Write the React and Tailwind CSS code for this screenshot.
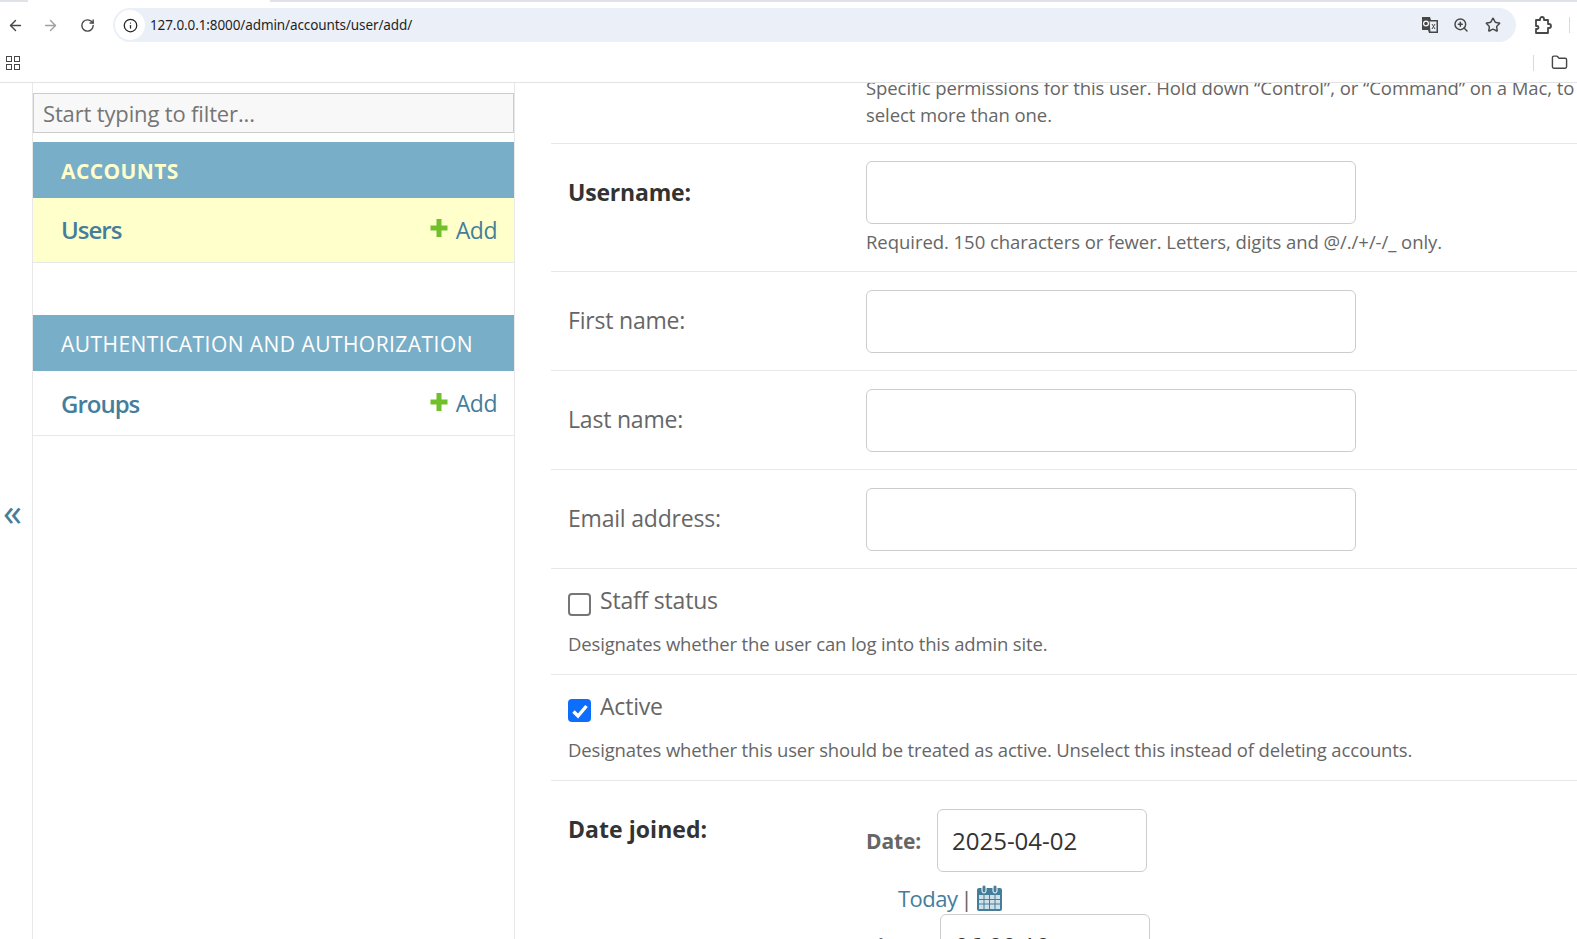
import { ArrowLeft, ArrowRight, RotateCw, Info, ZoomIn, Star, Folder } from "lucide-react";

const font = { fontFamily: '"Open Sans", "Noto Sans", sans-serif' };

const Plus = () => (
  <svg width="18" height="20" viewBox="0 0 18 20" className="shrink-0">
    <path d="M6.5 1h5v6.500h6v5h-6V19h-5v-6.500H.5v-5h6z" fill="#70bf2b" />
  </svg>
);

const ModelRow = ({ name, active }) => (
  <div
    className={`flex h-[65px] items-center justify-between border-b border-[#e8e8e8] pl-7 pr-[17px] ${active ? "bg-[#ffffcc]" : "pt-[1px]"}`}
  >
    <span className="text-[24px] font-semibold tracking-[-1px] text-[#447e9b]">{name}</span>
    <span className="flex items-center gap-2 text-[23px] tracking-[-0.5px] text-[#447e9b]">
      <span className="-mt-1">
        <Plus />
      </span>
      Add
    </span>
  </div>
);

const TextRow = ({ label, bold, help }) => (
  <div className={`flex items-start border-b border-[#e8e8e8] px-[17px] ${help ? "h-[128.5px] pt-[17px]" : "h-[99px] pt-[18px]"}`}>
    <div
      className={`w-[298px] text-[23px] leading-[36px] ${help ? "pt-[13px]" : "pt-[12px]"} ${bold ? "font-bold tracking-[-0.2px] text-[#333333]" : "tracking-[-0.2px] text-[#666666]"}`}
    >
      {label}
    </div>
    <div>
      <div className="h-[63px] w-[490px] rounded-[6px] border border-[#cccccc]" />
      {help && <p className="mt-[5px] text-[18.5px] leading-[26px] tracking-[-0.05px] text-[#666666]">{help}</p>}
    </div>
  </div>
);

const CheckRow = ({ label, help, checked }) => (
  <div className="h-[106px] border-b border-[#e8e8e8] px-[17px] pt-[13px]">
    <div className="flex items-start gap-[9px]">
      {checked ? (
        <span className="mt-[11px] flex h-[23px] w-[23px] items-center justify-center rounded-[4px] bg-[#0d6efd]">
          <svg width="18" height="16" viewBox="0 0 18 16">
            <path d="M2.500 8.500l4.500 4.500 8.500-10" fill="none" stroke="white" strokeWidth="3.400" />
          </svg>
        </span>
      ) : (
        <span className="mt-[11px] h-[23px] w-[23px] rounded-[4px] border-2 border-[#767676] bg-white" />
      )}
      <span className="text-[23px] leading-[36px] tracking-[-0.2px] text-[#666666]">{label}</span>
    </div>
    <p className="mt-[13px] text-[18.5px] leading-[26px] tracking-[-0.15px] text-[#666666]">{help}</p>
  </div>
);

export default function App() {
  return (
    <div className="flex h-[939px] flex-col overflow-hidden bg-white" style={font}>
      {/* browser chrome */}
      <div className="h-[83px] shrink-0 border-b border-[#e3e3e3]" style={{ fontFamily: '"Noto Sans", sans-serif' }}>
        <div className="flex h-[2px]">
          <div className="w-[28px] bg-[#dfe3e8]" />
          <div className="ml-[242px] flex-1 bg-[#dfe3e8]" />
        </div>
        <div className="flex h-[46px] items-center">
          <ArrowLeft className="ml-[7px] size-[17px] text-[#474747]" strokeWidth={2} />
          <ArrowRight className="ml-[18px] size-[17px] text-[#a0a0a0]" strokeWidth={2} />
          <RotateCw className="ml-[21px] size-[15px] text-[#474747]" strokeWidth={2.2} />
          <div className="ml-[18px] flex h-[34px] w-[1403px] items-center rounded-full bg-[#ebf0f8]">
            <span className="ml-[2px] flex size-[30px] items-center justify-center rounded-full bg-white">
              <Info className="size-[15px] text-[#222222]" strokeWidth={2} />
            </span>
            <span className="ml-[5px] text-[13.5px] tracking-[-0.1px] text-[#1f1f1f]">127.0.0.1:8000/admin/accounts/user/add/</span>
            <svg width="18" height="18" viewBox="0 0 18 18" className="ml-auto">
              <path d="M1 1h8l1 3h7v13H8l-1-3H1z" fill="#474747" />
              <path d="M8 5h8v11H9z" fill="#ebf0f8" stroke="#474747" />
              <path d="M11 8l3 5M14 8l-3 5" stroke="#474747" fill="none" />
              <circle cx="5" cy="7.5" r="2.4" fill="none" stroke="white" strokeWidth="1.2" />
            </svg>
            <ZoomIn className="ml-[14px] size-[16px] text-[#474747]" strokeWidth={2.2} />
            <Star className="ml-[16px] mr-[15px] size-[16px] text-[#474747]" strokeWidth={2.2} />
          </div>
          <svg width="18" height="18" viewBox="0 0 18 18" className="ml-[18px]">
            <path
              d="M2 4h4V3a2 2 0 0 1 4 0v1h4v4h1a2 2 0 0 1 0 4h-1v5H2v-4h1a1.500 1.500 0 0 0 0-3H2z"
              fill="none"
              stroke="#474747"
              strokeWidth="1.800"
              strokeLinejoin="round"
            />
          </svg>
          <div className="ml-[17px] h-[16px] w-[1px] bg-[#c9dcf7]" />
        </div>
        <div className="flex h-[29px] items-center">
          <div className="ml-[6px] grid grid-cols-2 gap-[2px]">
            <span className="size-[6px] border-[1.5px] border-[#474747]" />
            <span className="size-[6px] border-[1.5px] border-[#474747]" />
            <span className="size-[6px] border-[1.5px] border-[#474747]" />
            <span className="size-[6px] border-[1.5px] border-[#474747]" />
          </div>
          <div className="ml-auto h-[16px] w-[1px] bg-[#c9dcf7]" />
          <Folder className="ml-[17px] mr-[9px] size-[17px] text-[#474747]" strokeWidth={2} />
        </div>
      </div>

      <div className="flex min-h-0 flex-1">
        {/* collapse toggle */}
        <div className="flex w-[33px] shrink-0 items-center justify-center border-r border-[#e8e8e8] pr-[7px]">
          <span className="text-[38px] leading-none text-[#447e9b]">«</span>
        </div>

        {/* sidebar */}
        <div className="w-[482px] shrink-0 border-r border-[#e8e8e8] pt-[10px]">
          <div className="flex h-[40px] items-center border border-[#cccccc] bg-[#f8f8f8] px-[9px] text-[22px] tracking-[-0.15px] text-[#757575]">
            Start typing to filter...
          </div>
          <div className="mt-[9px] flex h-[56px] items-center bg-[#79aec8] pl-7 pt-[4px] text-[21px] font-bold tracking-[0.4px] text-[#ffffcc]">
            ACCOUNTS
          </div>
          <ModelRow name="Users" active />
          <div className="h-[52px]" />
          <div className="flex h-[56px] items-center bg-[#79aec8] pl-7 pt-[4px] text-[21px] tracking-[0.45px] text-white">
            AUTHENTICATION AND AUTHORIZATION
          </div>
          <ModelRow name="Groups" />
        </div>

        {/* form */}
        <div className="min-w-0 flex-1 overflow-hidden pl-[36px]">
          <div className="h-[60.5px] overflow-hidden border-b border-[#e8e8e8] pl-[315px]">
            <p className="-mt-[9px] w-[720px] text-[18.5px] leading-[27px] tracking-[-0.08px] text-[#666666]">
              Specific permissions for this user. Hold down “Control”, or “Command” on a Mac, to select more than one.
            </p>
          </div>
          <TextRow label="Username:" bold help="Required. 150 characters or fewer. Letters, digits and @/./+/-/_ only." />
          <TextRow label="First name:" />
          <TextRow label="Last name:" />
          <TextRow label="Email address:" />
          <CheckRow label="Staff status" help="Designates whether the user can log into this admin site." />
          <CheckRow
            label="Active"
            checked
            help="Designates whether this user should be treated as active. Unselect this instead of deleting accounts."
          />
          <div className="flex items-start px-[17px] pt-[28px]">
            <div className="w-[298px] pt-[2px] text-[23px] font-bold leading-[36px] tracking-[0.05px] text-[#333333]">Date joined:</div>
            <div>
              <div className="flex items-center">
                <span className="mt-[3px] w-[71px] text-[21px] font-bold tracking-[-0.1px] text-[#666666]">Date:</span>
                <div className="flex h-[63px] w-[210px] items-center rounded-[6px] border border-[#cccccc] pl-[14px] text-[24px] text-[#333333]">
                  2025-04-02
                </div>
              </div>
              <div className="mt-[11px] flex h-[30px] items-center pl-[32px] text-[22px] tracking-[-0.5px] text-[#447e9b]">
                Today
                <span className="ml-[3px] text-[#666666]">|</span>
                <svg width="27" height="28" viewBox="0 0 27 28" className="ml-[4px]">
                  <rect x="1" y="4" width="25" height="23" rx="2" fill="#447e9b" />
                  <path d="M3 11h21v14H3z" fill="#cfe0e9" />
                  <path d="M3 15.500h21M3 20h21M8 11v14M13.500 11v14M19 11v14" stroke="#447e9b" strokeWidth="1" />
                  <rect x="6" y="1" width="4" height="8" rx="2" fill="#447e9b" stroke="white" />
                  <rect x="17" y="1" width="4" height="8" rx="2" fill="#447e9b" stroke="white" />
                </svg>
              </div>
              <div className="mt-[1px] flex items-center">
                <span className="mt-[2px] w-[74px] text-[21px] font-bold tracking-[-0.5px] text-[#666666]">Time:</span>
                <div className="flex h-[63px] w-[210px] items-center rounded-[6px] border border-[#cccccc] pl-[14px] text-[24px] text-[#333333]">
                  06:00:10
                </div>
              </div>
            </div>
          </div>
        </div>
      </div>
    </div>
  );
}
